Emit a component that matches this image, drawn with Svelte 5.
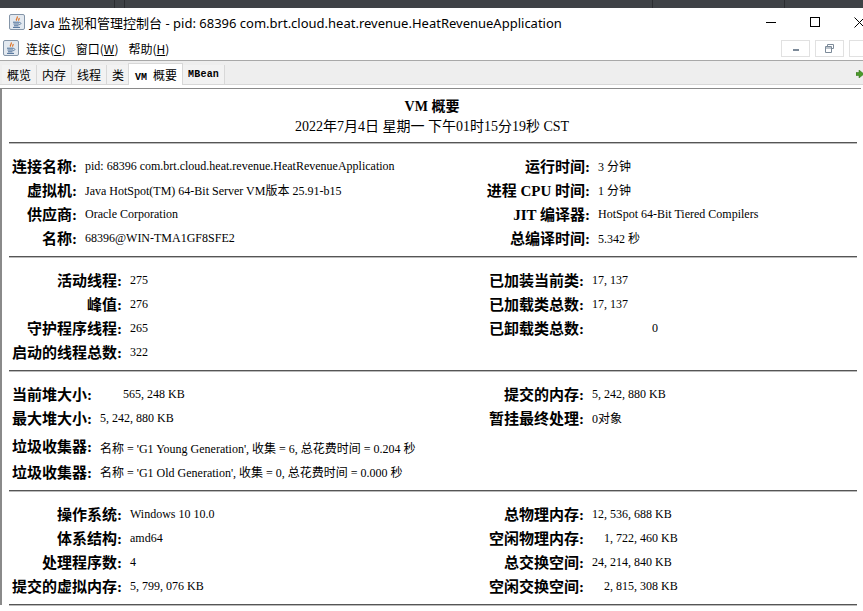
<script lang="ts">
  type Row = { label: string; value: string; label2?: string; value2?: string; pad?: string; pad2?: string };

  const sections: { cls: string; rows: Row[] }[] = [
    {
      cls: 'wide',
      rows: [
        { label: '连接名称:', value: 'pid: 68396 com.brt.cloud.heat.revenue.HeatRevenueApplication', label2: '运行时间:', value2: '3 分钟' },
        { label: '虚拟机:', value: 'Java HotSpot(TM) 64-Bit Server VM版本 25.91-b15', label2: '进程 CPU 时间:', value2: '1 分钟' },
        { label: '供应商:', value: 'Oracle Corporation', label2: 'JIT 编译器:', value2: 'HotSpot 64-Bit Tiered Compilers' },
        { label: '名称:', value: '68396@WIN-TMA1GF8SFE2', label2: '总编译时间:', value2: '5.342 秒' }
      ]
    },
    {
      cls: '',
      rows: [
        { label: '活动线程:', value: '275', label2: '已加装当前类:', value2: '17, 137' },
        { label: '峰值:', value: '276', label2: '已加载类总数:', value2: '17, 137' },
        { label: '守护程序线程:', value: '265', label2: '已卸载类总数:', value2: '0', pad2: 'pad-xl' },
        { label: '启动的线程总数:', value: '322' }
      ]
    },
    {
      cls: 'heap',
      rows: [
        { label: '当前堆大小:', value: '565, 248 KB', pad: 'pad-md', label2: '提交的内存:', value2: '5, 242, 880 KB' },
        { label: '最大堆大小:', value: '5, 242, 880 KB', label2: '暂挂最终处理:', value2: '0对象' }
      ]
    },
    {
      cls: '',
      rows: [
        { label: '操作系统:', value: 'Windows 10 10.0', label2: '总物理内存:', value2: '12, 536, 688 KB' },
        { label: '体系结构:', value: 'amd64', label2: '空闲物理内存:', value2: '1, 722, 460 KB', pad2: 'pad-sm' },
        { label: '处理程序数:', value: '4', label2: '总交换空间:', value2: '24, 214, 840 KB' },
        { label: '提交的虚拟内存:', value: '5, 799, 076 KB', label2: '空闲交换空间:', value2: '2, 815, 308 KB', pad2: 'pad-sm' }
      ]
    }
  ];

  const collectors = [
    "名称 = 'G1 Young Generation', 收集 = 6, 总花费时间 = 0.204 秒",
    "名称 = 'G1 Old Generation', 收集 = 0, 总花费时间 = 0.000 秒"
  ];

  const tabs = ['概览', '内存', '线程', '类', 'VM 概要', 'MBean'];
</script>

{#snippet javaIcon()}
  <svg class="java-icon" width="16" height="16" viewBox="0 0 16 16">
    <rect x="0.5" y="0.5" width="15" height="15" rx="1.5" fill="#e3e9f0" stroke="#8495a8" />
    <path d="M8 2.5c1.5 1.5-1.8 2.6-.4 4.2M10 4c.8 1-1 1.6-.2 2.7" fill="none" stroke="#e0701f" stroke-width="1.2" />
    <path d="M4 8.2h6.5M4.5 10h5.6M5 11.8h4.5M4 13.4h7" fill="none" stroke="#4a6d96" stroke-width="1" />
    <path d="M10.5 8.5c2 0 2 2-.6 2.2" fill="none" stroke="#4a6d96" stroke-width="0.8" />
  </svg>
{/snippet}

<div class="window">
  <div class="backdrop">
    <span class="cell c1"></span>
    <span class="cell c2"></span>
    <span class="cell c3"></span>
    <span class="cell c4"></span>
  </div>

  <header class="titlebar">
    {@render javaIcon()}
    <span class="title">Java 监视和管理控制台 - pid: 68396 com.brt.cloud.heat.revenue.HeatRevenueApplication</span>
    <div class="window-buttons">
      <svg width="11" height="11" viewBox="0 0 11 11"><path d="M0 5.5h10" stroke="#000" fill="none" /></svg>
      <svg width="11" height="11" viewBox="0 0 11 11"><rect x="0.5" y="0.5" width="9" height="9" stroke="#000" fill="none" /></svg>
      <svg width="11" height="11" viewBox="0 0 11 11"><path d="M0.5 0.5l10 10M10.5 0.5l-10 10" stroke="#000" fill="none" /></svg>
    </div>
  </header>

  <nav class="menubar">
    {@render javaIcon()}
    <span class="menu">连接(<u>C</u>)</span>
    <span class="menu">窗口(<u>W</u>)</span>
    <span class="menu">帮助(<u>H</u>)</span>
    <div class="frame-buttons">
      <button aria-label="最小化"><svg width="8" height="8" viewBox="0 0 8 8"><rect x="1" y="5" width="6" height="2" fill="#7c8a99" /></svg></button>
      <button aria-label="还原"><svg width="9" height="9" viewBox="0 0 9 9"><path d="M2.5 2.5v-2h6v4h-2M.5 2.5h6v6h-6zM.5 4h6" fill="none" stroke="#7c8a99" /></svg></button>
      <button aria-label="关闭"></button>
    </div>
  </nav>

  <div class="tabbar">
    {#each tabs as tab}
      <span class="tab" class:active={tab === 'VM 概要'} class:mono={tab === 'MBean'}>
        {#if tab === 'VM 概要'}<b>VM</b>概要{:else}{tab}{/if}
      </span>
    {/each}
    <svg class="arrow" width="8" height="8" viewBox="0 0 8 8"><path d="M0 2.5h3v-2.5l5 4-5 4v-2.5h-3z" fill="#4c9a2a" stroke="#2d6a14" stroke-width="0.5" /></svg>
  </div>

  <main class="panel">
    <div class="heading">
      <div class="heading-title">VM 概要</div>
      <div class="heading-date">2022年7月4日 星期一 下午01时15分19秒 CST</div>
    </div>

    {#each sections as section, i}
      <hr />
      <section class="grid {section.cls}">
        {#each section.rows as row}
          <div class="label">{row.label}</div>
          <div class="value {row.pad ?? ''}">{row.value}</div>
          <div class="label">{row.label2 ?? ''}</div>
          <div class="value {row.pad2 ?? ''}">{row.value2 ?? ''}</div>
        {/each}
        {#if i === 2}
          {#each collectors as gc, j}
            <div class="label" class:gc-first={j === 0}>垃圾收集器:</div>
            <div class="value gc-value" class:gc-first={j === 0}>{gc}</div>
          {/each}
        {/if}
      </section>
    {/each}
    <hr />
  </main>
</div>

<style>
  :global(body) {
    margin: 0;
    background: #fff;
    overflow: hidden;
  }

  .window {
    width: 863px;
    height: 611px;
    overflow: hidden;
    background: #fff;
    color: #000;
    font-family: 'Liberation Serif', 'Noto Sans CJK SC', serif;
  }

  .backdrop {
    height: 8px;
    display: flex;
    background: #3f4246;
  }

  .cell {
    border-right: 1px solid #2b2d30;
    box-sizing: border-box;
  }

  .c1 {
    width: 115px;
  }

  .c2 {
    width: 10px;
  }

  .c3 {
    width: 528px;
  }

  .c4 {
    width: 132px;
  }

  .titlebar {
    height: 28px;
    display: flex;
    align-items: center;
    padding-left: 9px;
    font-family: 'Noto Sans', 'Noto Sans CJK SC', sans-serif;
    font-size: 13px;
  }

  .title {
    margin-left: 5px;
  }

  .window-buttons {
    margin-left: auto;
    display: flex;
    gap: 33px;
    margin-right: -2px;
  }

  .menubar {
    height: 24px;
    display: flex;
    align-items: center;
    padding-left: 3px;
    font-family: 'Noto Sans CJK SC', sans-serif;
    font-size: 12px;
  }

  .menu {
    margin-left: 10px;
  }

  .menu:first-of-type {
    margin-left: 7px;
  }

  .frame-buttons {
    margin-left: auto;
    display: flex;
    gap: 5px;
    margin-right: -15px;
  }

  .frame-buttons button {
    width: 29px;
    height: 17px;
    padding: 0;
    display: flex;
    align-items: center;
    justify-content: center;
    background: #fff;
    border: 1px solid #e1e1e1;
  }

  .tabbar {
    height: 23px;
    display: flex;
    align-items: flex-end;
    padding-left: 2px;
    background: #eee;
    border-top: 1px solid #a8a8a8;
    border-bottom: 1px solid #d8d8d8;
    font-family: 'Noto Sans CJK SC', sans-serif;
    font-size: 12px;
    position: relative;
  }

  .tab {
    height: 19px;
    line-height: 19px;
    padding: 0 5px;
    border-right: 1px solid #d8d8d8;
    background: #f2f2f2;
  }

  .tab.active {
    width: 55px;
    height: 22px;
    line-height: 22px;
    padding: 0 0 0 6px;
    background: #fff;
    border: 1px solid #d8d8d8;
    border-bottom: none;
    box-sizing: border-box;
    margin-bottom: -1px;
    margin-left: -2px;
  }

  .tab.active b {
    font-family: 'Liberation Mono', monospace;
    font-size: 10px;
    margin-right: 6px;
  }

  .tab.mono {
    font-family: 'Liberation Mono', monospace;
    font-weight: 700;
    font-size: 10px;
    letter-spacing: 0.2px;
  }

  .arrow {
    position: absolute;
    right: -1px;
    top: 9px;
  }

  .panel {
    margin-top: 3px;
    margin-right: 2px;
    border-top: 1px solid #8a8a8a;
    border-left: 2px solid #8a8a8a;
    padding: 0 4px 0 7px;
  }

  .heading {
    height: 53px;
    padding-top: 8px;
    box-sizing: border-box;
    padding-right: 2px;
    text-align: center;
  }

  .heading-title {
    font-size: 14px;
    font-weight: 700;
    line-height: 19px;
  }

  .heading-date {
    font-size: 14px;
    line-height: 20px;
    margin-top: 1px;
  }

  hr {
    margin: 0;
    border: none;
    height: 1px;
    background: #555;
    box-shadow: 0 1px 0 #bbb;
  }

  .grid {
    display: grid;
    grid-template-columns: auto 1fr auto 273px;
    grid-auto-rows: 24px;
    column-gap: 8px;
    align-items: center;
    padding: 11px 0 6px 3px;
    margin-right: -8px;
    box-sizing: border-box;
  }

  .grid.wide {
    grid-template-columns: auto 1fr auto 267px;
  }

  .grid.heap {
    grid-template-rows: 24px 24px 30px 24px;
  }

  .label {
    font-family: 'Liberation Serif', 'Noto Sans CJK SC', serif;
    font-size: 15px;
    font-weight: 700;
    text-align: right;
    white-space: nowrap;
    padding-bottom: 2px;
  }

  .value {
    font-size: 12px;
    white-space: nowrap;
  }

  .gc-value {
    grid-column: 2 / 5;
  }

  .gc-first {
    align-self: end;
    line-height: 22px;
  }

  .pad-sm {
    padding-left: 12px;
  }

  .pad-md {
    padding-left: 23px;
  }

  .pad-xl {
    padding-left: 60px;
  }
</style>
